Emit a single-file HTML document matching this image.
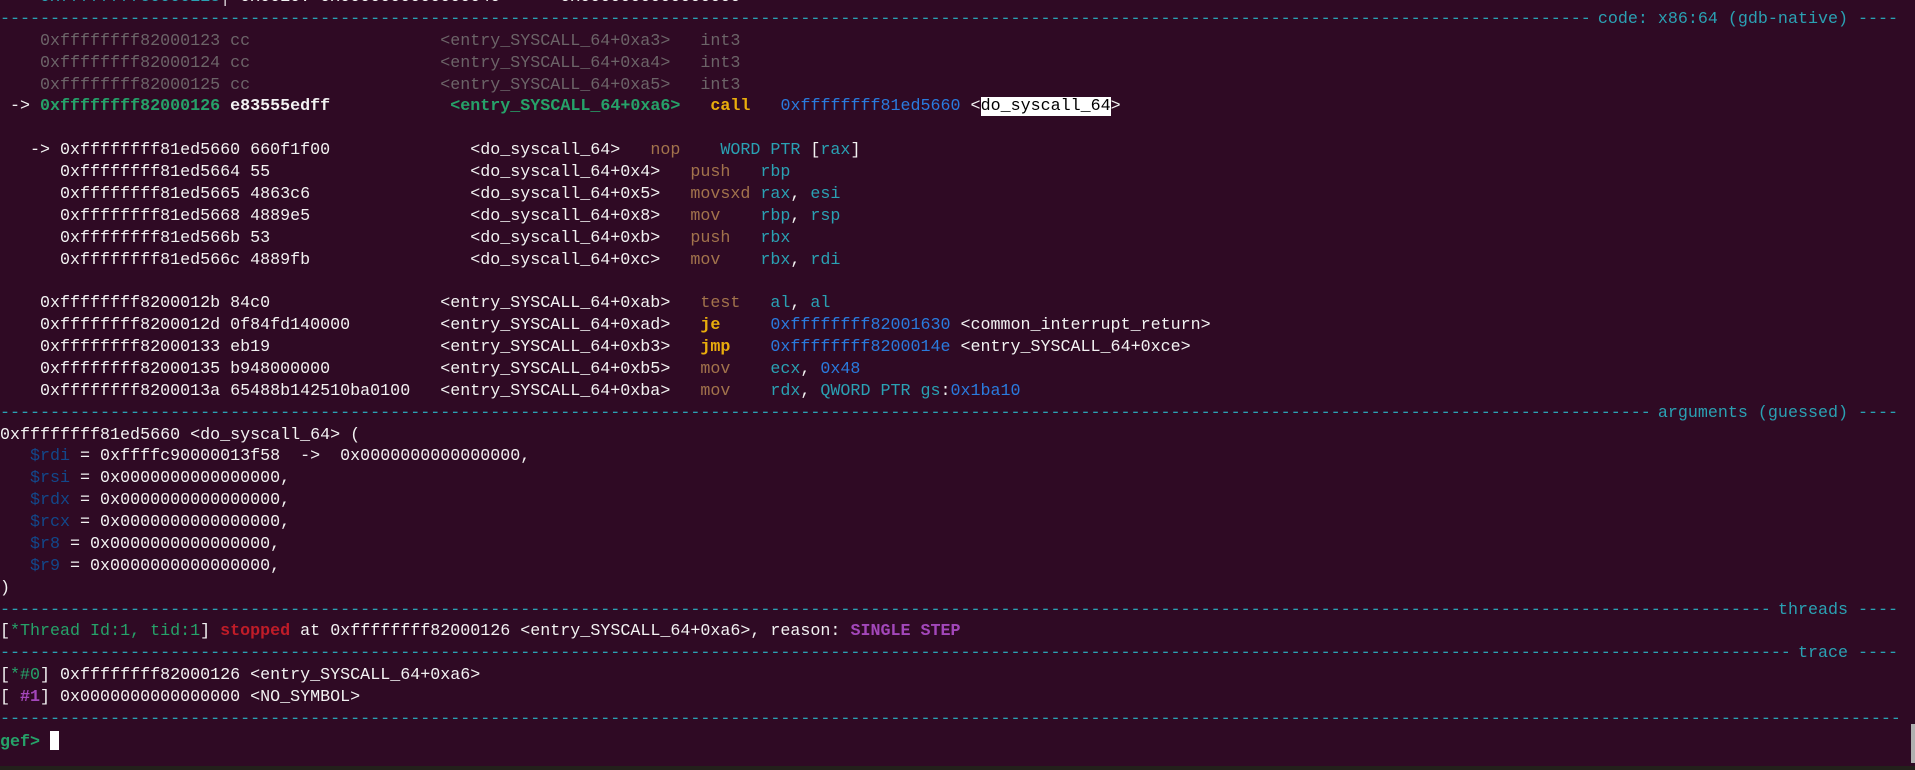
<!DOCTYPE html>
<html><head><meta charset="utf-8"><style>
html,body{margin:0;padding:0;background:#2f0a24;width:1915px;height:770px;overflow:hidden;position:relative}
pre{position:absolute;left:0;top:-13px;margin:0;font-family:"Liberation Mono","DejaVu Sans Mono",monospace;font-size:16.68px;line-height:21.88px;color:#f2f2f2;white-space:pre;letter-spacing:0}
.c{color:#2aa1b3}.d{color:#6c6468}.g{color:#26a269}.gb{color:#26a269;font-weight:bold}
.y{color:#e9ad0c;font-weight:bold}.b{color:#2a7bde}.o{color:#a2734c}.t{color:#2aa1b3}
.r{color:#c01c28;font-weight:bold}.p{color:#a347ba}.pb{color:#a347ba;font-weight:bold}.rg{color:#12488b}
.hl{background:#fff;color:#000}
.h{display:inline-flex;width:1898px;color:#2aa1b3;vertical-align:top}
.h .f{flex:1;overflow:hidden;white-space:pre}
#sb{position:absolute;left:1911px;top:724px;width:4px;height:39px;background:#b0b0b0}
#bot{position:absolute;left:0;top:766px;width:1915px;height:4px;background:#23201b}
#cur{display:inline-block;width:9px;height:19px;background:#fff;vertical-align:-4px}
</style></head><body>
<pre><span class="c">    0xffffffffc0000118</span>│<span>+0x0010: 0x0000000000000040</span>      <span>0x0000000000000000</span>
<span class="h"><span class="f">------------------------------------------------------------------------------------------------------------------------------------------------------------------------------------------------------</span><span> code: x86:64 (gdb-native) ----</span></span>
<span class="d">    0xffffffff82000123 cc                   &lt;entry_SYSCALL_64+0xa3&gt;   int3</span>
<span class="d">    0xffffffff82000124 cc                   &lt;entry_SYSCALL_64+0xa4&gt;   int3</span>
<span class="d">    0xffffffff82000125 cc                   &lt;entry_SYSCALL_64+0xa5&gt;   int3</span>
 -&gt; <span class="gb">0xffffffff82000126</span> <b>e83555edff</b>            <span class="gb">&lt;entry_SYSCALL_64+0xa6&gt;</span>   <span class="y">call</span>   <span class="b">0xffffffff81ed5660</span> &lt;<span class="hl">do_syscall_64</span>&gt;

   -&gt; 0xffffffff81ed5660 660f1f00              &lt;do_syscall_64&gt;   <span class="o">nop</span>    <span class="t">WORD PTR</span> [<span class="t">rax</span>]
      0xffffffff81ed5664 55                    &lt;do_syscall_64+0x4&gt;   <span class="o">push</span>   <span class="t">rbp</span>
      0xffffffff81ed5665 4863c6                &lt;do_syscall_64+0x5&gt;   <span class="o">movsxd</span> <span class="t">rax</span>, <span class="t">esi</span>
      0xffffffff81ed5668 4889e5                &lt;do_syscall_64+0x8&gt;   <span class="o">mov</span>    <span class="t">rbp</span>, <span class="t">rsp</span>
      0xffffffff81ed566b 53                    &lt;do_syscall_64+0xb&gt;   <span class="o">push</span>   <span class="t">rbx</span>
      0xffffffff81ed566c 4889fb                &lt;do_syscall_64+0xc&gt;   <span class="o">mov</span>    <span class="t">rbx</span>, <span class="t">rdi</span>

    0xffffffff8200012b 84c0                 &lt;entry_SYSCALL_64+0xab&gt;   <span class="o">test</span>   <span class="t">al</span>, <span class="t">al</span>
    0xffffffff8200012d 0f84fd140000         &lt;entry_SYSCALL_64+0xad&gt;   <span class="y">je</span>     <span class="b">0xffffffff82001630</span> &lt;common_interrupt_return&gt;
    0xffffffff82000133 eb19                 &lt;entry_SYSCALL_64+0xb3&gt;   <span class="y">jmp</span>    <span class="b">0xffffffff8200014e</span> &lt;entry_SYSCALL_64+0xce&gt;
    0xffffffff82000135 b948000000           &lt;entry_SYSCALL_64+0xb5&gt;   <span class="o">mov</span>    <span class="t">ecx</span>, <span class="b">0x48</span>
    0xffffffff8200013a 65488b142510ba0100   &lt;entry_SYSCALL_64+0xba&gt;   <span class="o">mov</span>    <span class="t">rdx</span>, <span class="t">QWORD PTR gs</span>:<span class="b">0x1ba10</span>
<span class="h"><span class="f">------------------------------------------------------------------------------------------------------------------------------------------------------------------------------------------------------</span><span> arguments (guessed) ----</span></span>
0xffffffff81ed5660 &lt;do_syscall_64&gt; (
   <span class="rg">$rdi</span> = 0xffffc90000013f58  -&gt;  0x0000000000000000,
   <span class="rg">$rsi</span> = 0x0000000000000000,
   <span class="rg">$rdx</span> = 0x0000000000000000,
   <span class="rg">$rcx</span> = 0x0000000000000000,
   <span class="rg">$r8</span> = 0x0000000000000000,
   <span class="rg">$r9</span> = 0x0000000000000000,
)
<span class="h"><span class="f">------------------------------------------------------------------------------------------------------------------------------------------------------------------------------------------------------</span><span> threads ----</span></span>
[<span class="g">*Thread Id:1, tid:1</span>] <span class="r">stopped</span> at 0xffffffff82000126 &lt;entry_SYSCALL_64+0xa6&gt;, reason: <span class="pb">SINGLE STEP</span>
<span class="h"><span class="f">------------------------------------------------------------------------------------------------------------------------------------------------------------------------------------------------------</span><span> trace ----</span></span>
[<span class="g">*#0</span>] 0xffffffff82000126 &lt;entry_SYSCALL_64+0xa6&gt;
[ <span class="pb">#1</span>] 0x0000000000000000 &lt;NO_SYMBOL&gt;
<span class="h"><span class="f">------------------------------------------------------------------------------------------------------------------------------------------------------------------------------------------------------</span></span>
<span class="gb">gef&gt;</span> <span id="cur"></span></pre>
<div id="sb"></div><div id="bot"></div>
</body></html>
